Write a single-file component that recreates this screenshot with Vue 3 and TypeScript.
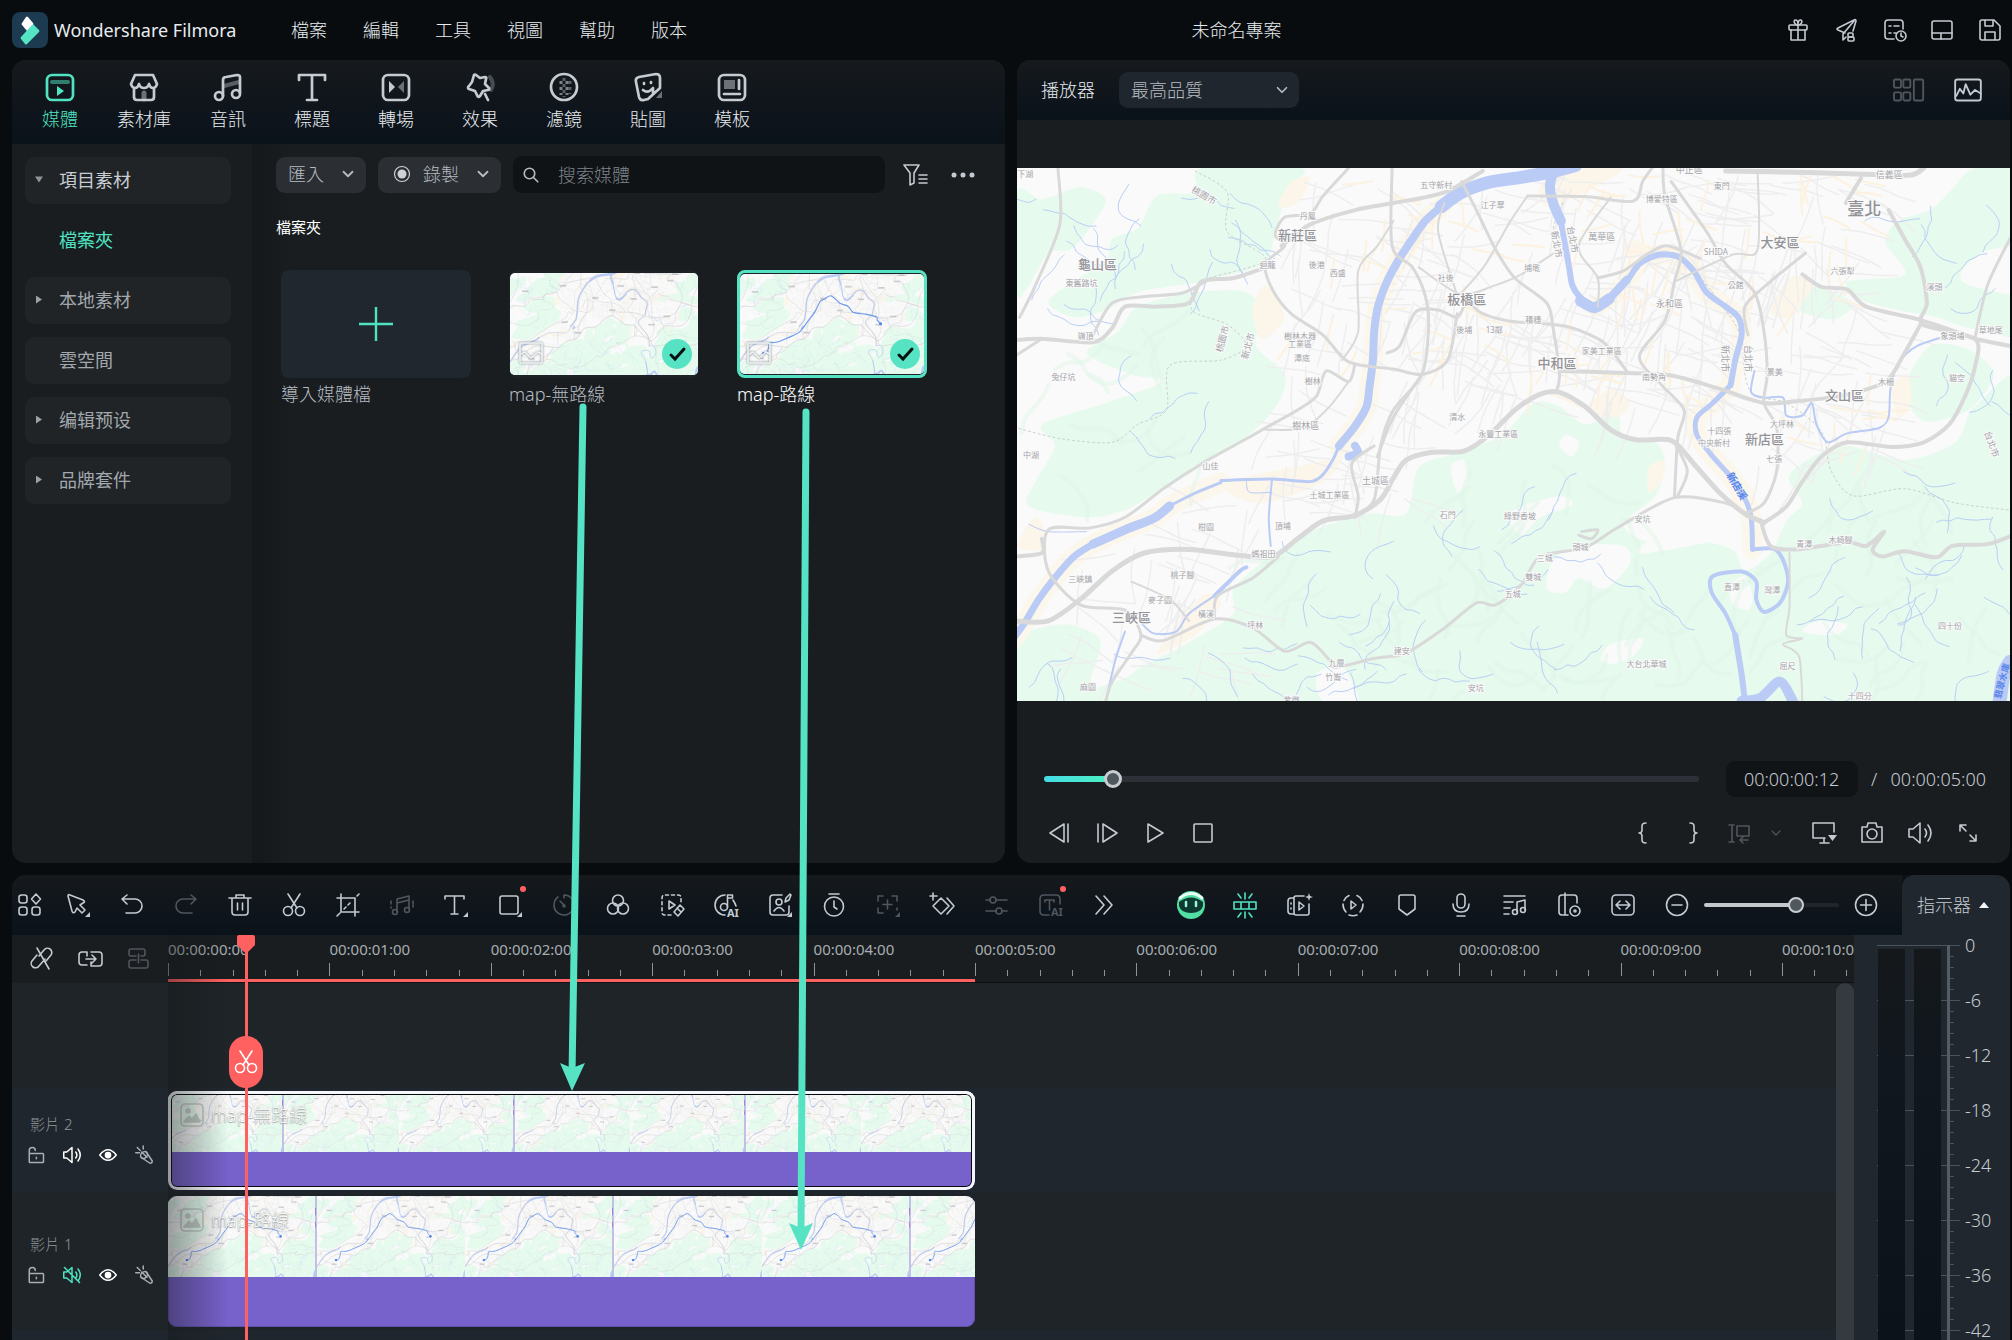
<script setup lang="ts">
import { ref } from 'vue'

type Tool = { icon: string; label: string; dim?: boolean; dot?: boolean; accent?: boolean }
type Clip = { name: string; thumbs: number; route: boolean; selected: boolean }
type Track = { label: string; muted: boolean; clip: Clip }

const corner = '<path d="M24 19v5h-5z" fill="currentColor" stroke="none"/>'

/* Icon markup on a 24 unit grid, stroked with the current colour */
const icons: Record<string, string> = {
  gift: '<rect x="3" y="7" width="18" height="5" rx="1"/><path d="M5 12v10h14V12M12 7v15M12 7C8 7 7 2 9.500 2S12 5 12 7c0-2 0-5 2.500-5S16 7 12 7"/>',
  send: '<path d="M11 15 4 12Q2 11 4 10L20 2q2-1 2 1l-3 10M20 3 9 16v6l3-3"/><rect x="14" y="15" width="5" height="4" rx="1"/><rect x="14" y="19" width="6" height="4" rx="1"/>',
  tasks: '<path d="M21 11V5q0-3-3-3H6Q3 2 3 5v13q0 3 3 3h6M7 8h2M12 8h5M7 15h2M12 15h2"/><circle cx="19" cy="18" r="5"/><path d="M19 15v3l2 1"/>',
  layout: '<rect x="2" y="3" width="20" height="18" rx="2"/><path d="M2 15h20M11 15v6"/>',
  save: '<path d="M2 4q0-2 2-2h12l6 6v12q0 2-2 2H4q-2 0-2-2zM7 2v6h8V2M7 22v-8h10v8"/>',
  chevron: '<path d="m6 9 6 6 6-6"/>',
  search: '<circle cx="10" cy="10" r="7"/><path d="m15 15 6 6"/>',
  filter: '<path d="M1 2h15l-5 8v10l-4 2V10zM16 12h8M16 16h8M16 20h8"/>',
  more: '<g fill="currentColor" stroke="none"><circle cx="3" cy="12" r="2.500"/><circle cx="12" cy="12" r="2.500"/><circle cx="21" cy="12" r="2.500"/></g>',
  record: '<circle cx="12" cy="12" r="10"/><circle cx="12" cy="12" r="6" fill="currentColor" stroke="none"/>',
  panes: '<rect x="0" y="3" width="6" height="7" rx="1"/><rect x="8" y="3" width="6" height="7" rx="1"/><rect x="0" y="14" width="6" height="7" rx="1"/><rect x="8" y="14" width="6" height="7" rx="1"/><rect x="17" y="3" width="8" height="18" rx="1"/>',
  scope: '<rect x="1" y="3" width="22" height="18" rx="2"/><path d="m2 17 3-6 3 4 2-8 4 9 4-4 5 3"/>',
  prev: '<path d="M17 3 3 12l14 9zM21 3v18"/>',
  step: '<path d="m8 3 14 9-14 9zM3 3v18"/>',
  play: '<path d="m5 3 15 9-15 9z"/>',
  stop: '<rect x="3" y="3" width="18" height="18" rx="1"/>',
  braceL: '<path d="M14 2q-4 0-4 3v4q0 3-3 3 3 0 3 3v4q0 3 4 3"/>',
  braceR: '<path d="M10 2q4 0 4 3v4q0 3 3 3-3 0-3 3v4q0 3-4 3"/>',
  lift: '<path d="M4 4v17M1 4h5M1 21h5M9 5h12v10H9zM13 19h7M15 16l-3 3 3 3"/>',
  monitor: '<path d="M13 17H1V2h21v9M8 22h9M12 17v5"/><path d="M16 14h9l-4.500 6z" fill="currentColor" stroke="none"/>',
  camera: '<path d="M2 6h5l1-4h8l1 4h5v15H2z"/><circle cx="12" cy="13" r="5"/>',
  speaker: '<path d="M1 8h4l7-6v20l-7-6H1zM17 8q3 4 0 8M20 4q6 8 0 16"/>',
  muted: '<path d="M1 8h4l7-6v20l-7-6H1zM17 8q3 4 0 8M20 4q6 8 0 16M2 2l20 20"/>',
  expand: '<path d="M4 10V4h6M4 4l6 6M20 14v6h-6M20 20l-6-6"/>',
  grid: '<rect x="1" y="2" width="8" height="8" rx="2.500"/><rect x="1" y="14" width="8" height="8" rx="2.500"/><rect x="14" y="14" width="8" height="8" rx="2.500"/><path d="m18 1 4.500 5-4.500 5-4.500-5z"/>',
  cursor: '<path d="M2 3q0-2 2-1l13 5q3 2 0 3l-3 2 5 5-3 3-5-5-2 4q-2 2-3-1z"/>' + corner,
  undo: '<path d="M7 2 2 6l5 5M2 6h13a6.500 6.500 0 0 1 0 14H6"/>',
  redo: '<path d="m17 2 5 4-5 5M22 6H9a6.500 6.500 0 0 0 0 14h9"/>',
  trash: '<path d="M1 5h22M8 5V2h8v3M4 5v14q0 3 3 3h10q3 0 3-3V5M9.500 10v7M14.500 10v7"/>',
  cut: '<path d="m6 1 9 14M18 1 9 15"/><circle cx="6" cy="18" r="4.500"/><circle cx="18" cy="18" r="4.500"/>',
  crop: '<path d="M5 1v18h18M1 5h18v18M8 16l2-2M12 12l2-2M21 3l2-2M1 23l3-3"/>',
  beat: '<path d="M7 19V6l12-3v13M7 10l12-3M1 8v3M23 8v3M1 14v1M23 12v2"/><circle cx="5" cy="19" r="2.500"/><circle cx="17" cy="17" r="2.500"/>',
  text: '<path d="M1 6V3h19v3M10.500 3v18M7 21h7"/>' + corner,
  mask: '<rect x="2" y="3" width="18" height="18" rx="2"/>' + corner,
  speed: '<path d="M6 4A10 10 0 1 0 12 2v3M8 8l4 4"/><circle cx="12" cy="13" r="1"/>',
  color: '<circle cx="12" cy="7.500" r="5.500"/><circle cx="7" cy="15.500" r="5.500"/><circle cx="17" cy="15.500" r="5.500"/>',
  smart: '<path d="M11 22H5q-3 0-3-3V5q0-3 3-3h13q3 0 3 3v4" stroke-dasharray="3 3"/><path d="m9 8 6 4-6 4zM20 12l4 4-6 7-4-4zM17 15l4 4"/>',
  audioAi: '<path d="M11 22A10 10 0 0 1 11 2M19 7q2 3 3 6"/><circle cx="10" cy="14" r="3.500"/><path d="M13.500 14V2h5v3h-5"/><text x="13" y="24" font-size="11" font-weight="700" stroke="none" fill="currentColor">AI</text>',
  portrait: '<path d="M14 2H5Q2 2 2 5v14q0 3 3 3h13q3 0 3-3v-6M17 9l1-4 4-4 1 1-2 5z"/><circle cx="11" cy="9" r="3"/><path d="M6 18q5-7 10 0"/>' + corner,
  timer: '<path d="M7 1h10"/><circle cx="12" cy="13.500" r="9.500"/><path d="M12 8v6l3 2"/>',
  track: '<path d="M2 8V3h5M16 3h5v5M21 15v2M7 20H2v-5M11.500 7v9M7 11.500h9"/>' + corner,
  keyframe: '<path d="m11 5 8 8-8 8-8-8zM17 5l7 8-7 8M3 0v7M0 3h7"/>',
  adjust: '<path d="M2 7h4M12 7h11M2 18h10M18 18h5"/><circle cx="9" cy="7" r="3"/><circle cx="15" cy="18" r="3"/>',
  textAi: '<path d="M11 22H6q-4 0-4-4V6q0-4 4-4h12q4 0 4 4v5M7 9V7h9v2M11.500 7v10"/><text x="13" y="23" font-size="11" font-weight="700" stroke="none" fill="currentColor">AI</text>',
  forward: '<path d="m4 3 8 9-8 9M12 3l8 9-8 9"/>',
  bot: '<circle cx="12" cy="12" r="14" fill="#52dfa4" stroke="none"/><path d="M1 5q11-9 22 0" stroke="#eafff5" stroke-width="3"/><path d="M0 9q12-9 24 0v4q-2 7-12 7T0 13z" fill="#0d3b31" stroke="none"/><path d="M7 9v4M17 9v4" stroke="#9df5dc" stroke-width="2.500"/>',
  split: '<path d="M1 9h22v7H1zM8 9v7M16 9v7M12 0v6M12 19v6M5 1l3 4M19 1l-3 4M5 24l3-4M19 24l-3-4"/>',
  sceneAi: '<path d="M17 3H9Q7 3 7 5v15q0 2 2 2h11q2 0 2-2v-9M7 5H4Q1 5 1 8v10q0 3 3 3h3M4 10v1M4 15v1M12 9l5 4-5 4z"/><path d="m22 0 1 3 3 1-3 1-1 3-1-3-3-1 3-1z" fill="currentColor" stroke="none"/>',
  render: '<path d="M8 2.500a10 10 0 0 0-5 5M2 11q0 5 3 8M16 2.500a10 10 0 0 1 5 5M22 11q0 5-3 8M8 22q4 1.500 8 0M10 8l5 4-5 4z"/>',
  marker: '<path d="M4 4q0-2 2-2h12q2 0 2 2v12l-8 6-8-6z"/>',
  mic: '<rect x="8" y="1" width="8" height="14" rx="4"/><path d="M4 11q0 8 8 8t8-8M8 23h8"/>',
  mixer: '<path d="M1 3h21M1 9h9M1 15h6M1 21h5M14 19V9l8-2v10"/><circle cx="12" cy="19" r="2.500"/><circle cx="20" cy="17" r="2.500"/>',
  preview: '<path d="M11 22H5q-3 0-3-3V5q0-3 3-3h12q3 0 3 3v5M8 0v22"/><circle cx="18" cy="18" r="5"/><circle cx="18" cy="18" r="1"/>',
  fit: '<rect x="1" y="2" width="22" height="20" rx="4"/><path d="M6 12h12M9 8l-4 4 4 4M15 8l4 4-4 4"/>',
  minus: '<circle cx="12" cy="12" r="10.500"/><path d="M7 12h10"/>',
  plus: '<circle cx="12" cy="12" r="10.500"/><path d="M6.500 12h11M12 6.500v11"/>',
  unlink: '<path d="M9 10 14 4a4 4 0 0 1 7 5l-5 6M15 13l-6 7a4 4 0 0 1-7-5l5-6M7 2l12 21"/>',
  chain: '<path d="M9 19H4q-3 0-3-3V9q0-3 3-3h5v4M16 6h5q3 0 3 3v8q0 3-3 3h-8v-4M8 13h10M14 9l4 4-4 4M13 6h4"/>',
  group: '<path d="M10 10H5q-2 0-2-2V5q0-2 2-2h12q2 0 2 2v3q0 2-2 2h-2M10 14H5q-2 0-2 2v4q0 2 2 2h15q2 0 2-2v-4q0-2-2-2h-5M12.500 8v9"/>',
  unlock: '<rect x="3" y="10" width="19" height="12" rx="1"/><path d="M3 10V6q0-4 4-4t4 4M12.500 15v2"/>',
  eye: '<path d="M1 12q11-14 22 0-11 14-22 0z"/><circle cx="12" cy="12" r="3.500" fill="currentColor"/>',
  effects: '<path d="m15 8 8 12q0 3-3 3L8 15"/><ellipse cx="12" cy="12" rx="5" ry="4" transform="rotate(-45 12 12)"/><path d="m9 8 7 7M1 9h5M3 2l4 4M11 0v4"/>',
  picture: '<rect x="1" y="1" width="22" height="22" rx="4"/><circle cx="8" cy="8" r="2" fill="currentColor"/><path d="m4 19 5-6 3 3 4-5 4 8z" fill="currentColor"/>',
  image: '<rect x="1" y="2" width="22" height="20" rx="1"/><path d="m2 13 4-2 6 6 7-6 4 2"/>',
}

/* Larger tab icons on a 30 unit grid */
const tabs = [
  { label: '媒體', icon: '<rect x="2" y="3" width="26" height="25" rx="5"/><path d="M7 10h16" stroke-width="4" opacity=".5"/><path d="m12 14 7 5-7 5z" fill="currentColor" stroke="none"/>' },
  { label: '素材庫', icon: '<path d="M6 3h18l4 9q-1 4-4 4t-4-4q-1 4-5 4t-5-4q-1 4-4 4t-4-4zM5 17v8q0 3 3 3h14q3 0 3-3v-8"/><path d="M15 21v6" stroke-width="5" opacity=".5"/>' },
  { label: '音訊', icon: '<path d="M10 24V8q0-3 3-3l11-2q3 0 3 2v16"/><path d="m11 14 15-4" stroke-width="4" opacity=".4"/><circle cx="6" cy="24" r="4"/><circle cx="23" cy="22" r="4"/>' },
  { label: '標題', icon: '<path d="M2 8V3h26v5M15 3v24M10 28h10"/>' },
  { label: '轉場', icon: '<rect x="2" y="3" width="26" height="25" rx="5"/><path d="m8 9 6 6-6 6z" fill="currentColor" stroke="none"/><path d="m23 9-6 6 6 6z" fill="currentColor" stroke="none" opacity=".5"/>' },
  { label: '效果', icon: '<path d="M9 3q1-1 2 0l4 3 5-1q2 0 1 2l-1 5 4 4q1 2-1 2l-5 1-3 5q-2 2-3-1l-2-4-6-2q-2-1 0-3l3-4zM20 22l3 6"/><path d="M25 5q5 7 1 13" stroke-width="4" opacity=".3"/>' },
  { label: '濾鏡', icon: '<circle cx="15" cy="15" r="13"/><path d="M12 9v14M18 9v14" stroke-width="3" stroke-linecap="butt" stroke-dasharray="3 3" opacity=".6"/><path d="M15 6v19M21 9v13" stroke-width="3" stroke-linecap="butt" stroke-dasharray="3 3" opacity=".4"/>' },
  { label: '貼圖', icon: '<path d="M23 2 6 5Q2 6 3 10l3 15q1 4 5 3l4-1 12-11V6q0-4-4-4zM11 11v1M18 10v1M10 18q5 4 10-2v6"/><path d="M29 19v7h-6z" fill="currentColor" opacity=".5" stroke="none"/>' },
  { label: '模板', icon: '<rect x="2" y="3" width="26" height="25" rx="5"/><path d="M7 8h11v9H7z" fill="currentColor" opacity=".5" stroke="none"/><path d="M22 8v9M7 22h16"/>' },
]

const menus = ['檔案', '編輯', '工具', '視圖', '幫助', '版本']
const windowTools = [['gift', '禮物'], ['send', '分享'], ['tasks', '工作'], ['layout', '版面'], ['save', '儲存']]
const folders = [
  { label: '項目素材', arrow: 'down', tone: 'strong' },
  { label: '檔案夾', arrow: '', tone: 'current' },
  { label: '本地素材', arrow: 'right', tone: '' },
  { label: '雲空間', arrow: '', tone: '' },
  { label: '编辑预设', arrow: 'right', tone: '' },
  { label: '品牌套件', arrow: 'right', tone: '' },
]
const media = [
  { label: 'map-無路線', route: false, active: false },
  { label: 'map-路線', route: true, active: true },
]

const editTools: Tool[] = [
  { icon: 'grid', label: '工具集' }, { icon: 'cursor', label: '選取' }, { icon: 'undo', label: '復原' },
  { icon: 'redo', label: '重做', dim: true }, { icon: 'trash', label: '刪除' }, { icon: 'cut', label: '分割' },
  { icon: 'crop', label: '裁切' }, { icon: 'beat', label: '節拍', dim: true }, { icon: 'text', label: '文字' },
  { icon: 'mask', label: '遮罩', dot: true }, { icon: 'speed', label: '速度', dim: true }, { icon: 'color', label: '色彩' },
  { icon: 'smart', label: '智慧剪輯' }, { icon: 'audioAi', label: 'AI 音訊' }, { icon: 'portrait', label: '人像' },
  { icon: 'timer', label: '時長' }, { icon: 'track', label: '追蹤', dim: true }, { icon: 'keyframe', label: '關鍵影格' },
  { icon: 'adjust', label: '調整', dim: true }, { icon: 'textAi', label: 'AI 文字', dim: true, dot: true }, { icon: 'forward', label: '更多' },
]
const viewTools: Tool[] = [
  { icon: 'bot', label: '助理' }, { icon: 'split', label: '自動分割', accent: true }, { icon: 'sceneAi', label: '場景' },
  { icon: 'render', label: '算圖' }, { icon: 'marker', label: '標記' }, { icon: 'mic', label: '錄音' },
  { icon: 'mixer', label: '混音' }, { icon: 'preview', label: '預覽' }, { icon: 'fit', label: '符合視窗' }, { icon: 'minus', label: '縮小' },
]

const quality = ref('最高品質')
const query = ref('')
const seek = ref(94)
const zoom = ref(71)
const timecode = ref('00:00:00:12')

const visibleSeconds = 10.446
const playheadSeconds = 0.486
const share = (seconds: number) => `${(seconds / visibleSeconds) * 100}%`
const seconds = Array.from({ length: 11 }, (_, i) => `00:00:${String(i).padStart(2, '0')}:00`)
const tracks: Track[] = [
  { label: '影片 2', muted: false, clip: { name: 'map-無路線', thumbs: 6.987, route: false, selected: true } },
  { label: '影片 1', muted: true, clip: { name: 'map-路線', thumbs: 5.434, route: true, selected: false } },
]
const levels = ['0', '-6', '-12', '-18', '-24', '-30', '-36', '-42']

/* Map geometry: survey points are converted to the 993 x 533 sheet */
const px = (x: number) => Math.round(((x - 11) / 1.565) * 10) / 10
const py = (y: number) => Math.round(((y - 22) / 2.8) * 10) / 10
const parse = (s: string) => s.split(' ').map((p) => p.split(',').map(Number)).map(([x, y]) => [px(x), py(y)])

function curve(s: string, closed = false): string {
  const p = parse(s)
  const n = p.length
  const at = (i: number) => (closed ? p[(i + n) % n] : p[Math.max(0, Math.min(n - 1, i))])
  let d = `M${p[0][0]} ${p[0][1]}`
  for (let i = 0; i < (closed ? n : n - 1); i++) {
    const [a, b, c, e] = [at(i - 1), at(i), at(i + 1), at(i + 2)]
    const f = (v: number) => v.toFixed(1)
    d += `C${f(b[0] + (c[0] - a[0]) / 7)} ${f(b[1] + (c[1] - a[1]) / 7)} ${f(c[0] - (e[0] - b[0]) / 7)} ${f(c[1] - (e[1] - b[1]) / 7)} ${c[0]} ${c[1]}`
  }
  return closed ? d + 'Z' : d
}

const greens = [
  '11,90 50,110 110,75 150,110 125,190 95,250 60,260 30,350 11,370',
  '230,100 290,90 300,22 455,22 440,80 425,140 415,200 395,290 300,340 200,370 150,420 100,440 60,400 90,350 150,280 160,220 200,190',
  '200,410 290,370 370,370 395,430 385,520 430,600 420,680 380,760 330,820 280,880 240,920 180,980 120,1000 30,970 40,900 70,800 50,740 150,680 240,620 190,600 120,540 170,480',
  '640,860 700,820 770,770 820,680 860,690 900,740 950,710 960,780 1010,790 1025,850 1010,940 960,1020 1000,1070 1060,1060 1130,1090 1150,1150 1190,1100 1215,1010 1240,960 1220,880 1300,800 1400,840 1480,790 1510,690 1600,640 1600,1560 160,1560 190,1440 260,1370 300,1330 350,1270 350,1200 400,1120 470,1040 560,990 620,990',
  '1510,22 1600,10 1600,210 1520,260 1490,340 1600,400 1600,500 1500,470 1450,440 1390,420 1330,390 1310,340 1400,320 1370,230 1390,170 1440,140 1470,90',
  '1230,380 1260,355 1320,400 1290,445 1240,425',
  '1440,520 1500,530 1540,600 1500,700 1430,730 1400,640',
  '-10,1360 80,1300 140,1340 130,1430 100,1560 -10,1560',
].map((s) => curve(s, true))
const clearings = [
  '840,1200 850,1120 890,1080 960,1080 970,1130 930,1200 890,1170 870,1210',
  '780,1000 800,970 860,940 880,965 830,1000 800,1050',
  '925,1400 940,1355 990,1340 975,1390 945,1410',
  '980,1100 1030,1030 1080,1000 1100,1060 1050,1085',
  '1130,1240 1128,1190 1150,1165 1162,1220 1155,1260',
  '490,1514 480,1440 520,1420 545,1514', '860,800 870,770 890,790 880,830', '690,860 710,840 715,900 700,930',
  '1240,1320 1265,1290 1310,1300 1290,1330',
].map((s) => curve(s, true))
const sands = [
  '830,70 885,22 960,22 900,90 840,130', '960,260 970,225 1000,240 985,290', '1190,420 1220,330 1260,340 1220,440',
  '380,420 400,350 430,440 395,500', '900,700 940,640 970,680 950,720', '1000,860 1025,840 1020,900 1000,930',
  '420,130 440,60 470,50 450,120', '11,1080 40,1000 55,1040 50,1090', '230,1380 300,1220 330,1240 290,1330',
  '1380,640 1405,600 1410,680 1390,720', '1130,960 1140,900 1165,930', '340,900 470,850 520,830 490,900 400,960 350,940',
].map((s) => curve(s, true))

const danshui = '675,130 650,170 630,220 608,280 590,340 576,410 570,480 568,560 563,630 558,690 540,745 515,800'
const dahan = '330,903 290,932 250,968 225,1003 180,1035 130,1075 100,1110 70,1170 45,1230 25,1290 5,1340'
const bend = '915,410 940,385 965,340 985,290 1015,265 1045,270 1070,310 1090,370 1120,410 1140,440 1145,490 1135,560 1128,630'
const xindian = '1128,630 1100,680 1075,720 1075,770 1100,830 1125,880 1148,940 1160,1000 1162,1090'
const banks = [danshui, dahan, bend, xindian].map((s) => curve(s))
const rivers = [
  ['885,15 850,32 800,48 750,62 705,92 675,130', 13], [danshui, 8], ['330,903 290,932 250,968', 3], ['250,968 225,1003 180,1035 130,1075', 9], ['130,1075 100,1110 70,1170 45,1230 25,1290 5,1340', 7],
  [bend, 6], [xindian, 5], ['515,800 505,840 490,880 470,900 410,893 330,897', 3], ['540,800 545,820 530,830', 8],
  ['853,22 845,70 850,120 862,170', 10], ['862,170 868,230 875,300 880,350 893,385 915,410', 6], ['893,395 915,413 938,388', 11], ['938,388 965,335', 8],
  ['1162,1090 1195,1088 1210,1120 1218,1180 1205,1240 1180,1265 1168,1230 1168,1180 1145,1152 1100,1165 1098,1210 1120,1270 1135,1330', 4],
  ['1135,1330 1145,1440 1150,1514', 6], ['1145,1514 1175,1505 1205,1460 1225,1514', 10], ['1565,1405 1555,1440 1548,1530', 14],
  ['1165,590 1160,650 1180,665 1210,665 1215,715 1240,715 1255,680 1262,740 1280,790 1310,765 1360,750 1375,720 1378,640 1390,570 1420,520 1480,485', 2],
  ['410,895 405,1000 408,1080', 2], ['370,1140 360,1150 320,1220', 4], ['320,1220 280,1270 260,1320 225,1325 205,1295', 2],
  ['180,1320 165,1400 150,1514', 2], ['120,1040 60,1040 30,1020', 1], ['370,900 375,930 410,930', 1],
].map(([s, w]) => ({ d: curve(s as string), w: w as number }))

const roads = [
  ['1375,140 1400,220 1425,300 1435,400 1428,460 1510,500 1510,580 1495,660 1470,740 1430,790 1380,803 1310,790 1270,830 1240,900 1215,970 1180,1015', 4],
  ['5,1290 60,1290 110,1230 160,1150 210,1100 280,1090 350,1105 410,1110 450,1060 490,1010 540,995 580,950 600,890 620,840 660,818 710,815 750,770 790,700 830,655 860,650 900,690 940,755 980,783 1035,785 1070,850 1110,930 1150,990 1180,1015', 5],
  ['5,505 50,500 130,510 160,470 180,410 230,410 280,400 300,340 350,330 400,300', 4], ['130,490 160,400 210,382 270,372 310,335', 3],
  ['530,22 490,100 470,150 430,160 415,210 430,240 400,290 410,360 440,430 490,490 530,565 600,585 645,600 685,560 700,430', 3],
  ['425,240 470,180 540,140 600,120 680,90 740,30', 4], ['598,22 598,240 630,300 650,380 655,470 645,600 600,700 580,800 570,950 540,1000', 3],
  ['707,60 730,140 760,250 790,330 840,400 850,470 860,600 855,650', 3], ['810,100 780,180 745,290 705,375', 2],
  ['860,250 800,320 760,350 705,375 640,300', 2], ['590,540 610,520 635,425 670,420 700,440 715,400 740,430 780,450 870,465 920,500 940,530 965,590', 3],
  ['860,590 940,595 1030,602 1110,640 1180,680 1230,675 1300,660 1370,620 1400,540 1425,460', 4], ['810,100 900,102 975,115 990,60 1005,22', 3],
  ['940,105 890,240 920,330 920,410', 2], ['1022,22 1025,100 1050,250 1040,340 1025,450 985,550 1020,630 1055,700 1045,780 1040,940', 3],
  ['1035,60 1090,200 1120,290 1165,370 1180,480 1185,600 1180,680 1200,750 1200,870 1180,960 1150,990', 3],
  ['1245,260 1190,340 1150,410 1155,490', 3], ['1240,320 1270,355 1310,362 1340,410 1420,445 1480,480 1510,500 1565,520', 4],
  ['920,330 960,310 1000,260 1030,240 1080,275', 3], ['1120,30 1250,35 1350,40 1410,42 1430,22', 5], ['1332,50 1308,120', 4],
  ['150,1514 160,1460 190,1380 205,1330 180,1260 110,1245 60,1150 60,1035 125,1030 180,1000 240,920 300,850 360,790 410,740 450,700 480,660 495,590 530,620 540,570', 3],
  ['400,755 460,750 500,690 530,620', 2], ['600,170 575,240 545,310 545,480 520,560', 2],
  ['205,1330 240,1345 320,1285 380,1310 430,1375 470,1350 500,1400 510,1420 570,1395 620,1380 680,1310 730,1240 760,1245 800,1190 830,1110 900,1085 950,1030 1040,945 1120,960 1150,990', 3],
  ['420,1110 380,1170 325,1220 320,1280', 3], ['190,1180 250,1230 280,1290', 2], ['895,1040 920,1035 910,1060 890,1050', 3],
  ['1175,1010 1190,1080 1230,1090 1310,1070 1340,1080 1368,1040 1350,1090 1365,1110 1400,1095 1450,1112 1475,1080 1530,1075 1570,1050', 4],
  ['1220,1100 1220,1250 1215,1330 1240,1340 1210,1355 1235,1390 1240,1514', 2], ['75,22 78,180 40,350 15,440', 3], ['11,545 50,500', 3],
  ['570,800 535,850 545,940 540,1000', 3], ['645,600 600,720 575,830', 3], ['680,120 670,200 700,380', 2], ['1040,790 1060,870 1045,940', 3],
  ['1170,30 1170,250 1130,265 1040,340', 2], ['1510,500 1530,350 1565,220', 3], ['5,1110 50,1100 50,1060', 4],
].map(([s, w]) => ({ d: curve(s as string), w: w as number }))

const borders = ['290,30 340,90 340,200 400,280 300,340 285,420 340,460 370,520 330,560 250,575 245,700 200,740 160,790 80,780 11,750',
  '865,120 850,200 875,280 885,360 915,405 970,330 1010,265 1060,290 1120,420 1145,500 1150,600 1165,660 1215,680 1270,760 1285,870 1320,940 1400,920 1480,960 1565,980'].map((s) => curve(s))

/* Small streets and creeks follow a fixed pseudo-random sequence */
let state = 7
const rnd = () => (state = (state * 16807) % 2147483647) / 2147483647
function scatter(boxes: number[][], len: number, tilt: number, steps: number): string[] {
  const out: string[] = []
  for (const [x0, y0, x1, y1, n] of boxes) {
    for (let i = 0; i < n; i++) {
      let x = x0 + rnd() * (x1 - x0)
      let y = y0 + rnd() * (y1 - y0)
      let a = tilt + (rnd() < 0.5 ? 0 : Math.PI / 2) + (rnd() - 0.5) * 0.6
      const pts = [`${x.toFixed(0)},${y.toFixed(0)}`]
      for (let k = 0; k < steps; k++) {
        a += (rnd() - 0.5) * (steps > 3 ? 1.2 : 0.4)
        x += Math.cos(a) * len
        y += Math.sin(a) * len * 1.8
        pts.push(`${x.toFixed(0)},${y.toFixed(0)}`)
      }
      out.push(curve(pts.join(' ')))
    }
  }
  return out
}
const streets = scatter([[440, 40, 820, 560, 90], [860, 30, 1360, 420, 120], [620, 400, 1120, 700, 80], [380, 560, 640, 960, 36], [1150, 480, 1380, 860, 40], [60, 1080, 360, 1440, 34], [200, 900, 500, 1080, 14]], 28, 0.25, 3)
const yellows = scatter([[440, 60, 820, 560, 26], [880, 40, 1340, 420, 44], [640, 420, 1100, 660, 24], [1180, 560, 1360, 800, 10]], 24, 0.2, 2)
const creeks = scatter([[20, 60, 220, 440, 13], [250, 60, 400, 300, 8], [60, 500, 360, 800, 4], [420, 1060, 1040, 1440, 32], [680, 840, 960, 1000, 4], [1260, 880, 1540, 1440, 22], [1380, 80, 1550, 380, 6], [1430, 540, 1540, 720, 4], [20, 1380, 120, 1480, 3], [200, 1380, 400, 1480, 4]], 11, 0.9, 8)
const ridges = scatter([[60, 420, 380, 900, 14], [420, 1060, 1540, 1490, 60], [680, 820, 980, 1060, 10], [1260, 840, 1540, 1080, 10]], 22, 0.7, 4)

const places: [number, number, string, number][] = [
  [1337, 135, '臺北', 17], [450, 210, '新莊區', 13], [137, 290, '龜山區', 13], [1205, 230, '大安區', 13], [715, 390, '板橋區', 13],
  [856, 568, '中和區', 13], [1306, 658, '文山區', 13], [1181, 780, '新店區', 13], [190, 1280, '三峽區', 13], [926, 213, '萬華區', 9],
  [1032, 402, '永和區', 9], [463, 742, '樹林區', 9], [572, 897, '土城區', 9], [1063, 27, '中正區', 9], [1376, 41, '信義區', 9],
  [667, 68, '五守新村', 8], [755, 123, '江子翠', 8], [466, 155, '丹鳳', 8], [403, 292, '迴龍', 8], [480, 292, '後港', 8], [513, 314, '西盛', 8],
  [682, 328, '社後', 8], [817, 300, '埔墘', 8], [819, 446, '積穗', 8], [711, 475, '後埔', 8], [758, 473, '13鄰', 8], [454, 492, '樹林木器', 8],
  [454, 513, '工業區', 8], [457, 552, '潭底', 8], [474, 616, '樹林', 8], [926, 533, '家美工業區', 8], [1008, 605, '南勢角', 8], [1197, 593, '景美', 8],
  [1020, 108, '博愛特區', 8], [1114, 72, '東門', 8], [1105, 256, 'SHIDA', 8], [1136, 347, '公館', 8], [1303, 309, '六張犁', 8], [1447, 355, '溪頭', 8],
  [1475, 491, '象頭埔', 8], [1535, 473, '草地尾', 8], [1482, 608, '貓空', 8], [1371, 621, '木柵', 8], [1208, 736, '大坪林', 8], [1110, 758, '十四張', 8],
  [1102, 791, '中央新村', 8], [1196, 835, '七張', 8], [700, 717, '清水', 8], [764, 764, '永豐工業區', 8], [112, 343, '東舊路坑', 8], [118, 491, '嶺頂', 8],
  [84, 607, '兔仔坑', 8], [33, 823, '中湖', 8], [314, 855, '山佳', 8], [500, 936, '土城工業區', 8], [685, 991, '石門', 8], [798, 994, '綠野香坡', 8],
  [990, 1003, '安坑', 8], [307, 1026, '柑園', 8], [427, 1022, '頂埔', 8], [397, 1102, '媽祖田', 8], [110, 1172, '三峽鎮', 8], [270, 1159, '桃子腳', 8],
  [235, 1230, '麥子園', 8], [307, 1268, '橫溪', 8], [384, 1301, '坪林', 8], [893, 1082, '頭城', 8], [837, 1113, '三城', 8], [819, 1165, '雙城', 8],
  [787, 1213, '五城', 8], [613, 1373, '建安', 8], [511, 1407, '九層', 8], [506, 1447, '竹崙', 8], [122, 1473, '麻園', 8], [729, 1476, '安坑', 8],
  [996, 1409, '大台北華城', 8], [1217, 1414, '屈尺', 8], [1243, 1072, '青潭', 8], [1300, 1062, '木崎腳', 8], [1193, 1202, '灣潭', 8], [1130, 1193, '直潭', 8],
  [1471, 1304, '四十份', 8], [1330, 1498, '十四分', 8], [24, 36, '下湖', 8], [441, 1509, '紫微', 8],
]
const tilted: [number, number, string, number, number][] = [
  [304, 98, '桃園市', 9, 30], [332, 500, '桃園市', 9, -75], [372, 520, '新北市', 9, -75], [856, 235, '新北市', 9, 80],
  [881, 222, '台北市', 9, 80], [1120, 555, '新北市', 9, 90], [1156, 555, '台北市', 9, 90], [1537, 795, '台北市', 9, 70],
]
const route = curve('210,1203 235,1190 252,1124 261,1045 300,1045 350,1025 401,985 460,940 519,877 594,704 645,580 687,432 720,400 780,348 855,457 925,506 968,595 1080,625 1164,664 1170,710 1198,763')
</script>

<template>
  <div class="app">
    <svg class="defs" aria-hidden="true">
      <symbol id="terrain" viewBox="0 0 993 533" preserveAspectRatio="none">
        <rect width="993" height="533" fill="#fafafa" />
        <path v-for="(d, i) in greens" :key="'g' + i" :d="d" fill="#e6fbee" />
        <path v-for="(d, i) in clearings" :key="'c' + i" :d="d" fill="#fafafa" />
        <path v-for="(d, i) in sands" :key="'s' + i" :d="d" fill="#fcf6ea" />
        <g fill="none" stroke-linecap="round" stroke-linejoin="round">
          <path v-for="(d, i) in banks" :key="'b' + i" :d="d" stroke="#fcf7ec" stroke-width="20" />
          <path v-for="(d, i) in ridges" :key="'ri' + i" :d="d" stroke="#dff6e8" stroke-width="4" opacity=".5" />
          <path v-for="(d, i) in streets" :key="'st' + i" :d="d" stroke="#eeeeef" stroke-width="1.5" />
          <path v-for="(d, i) in yellows" :key="'y' + i" :d="d" stroke="#fcf2df" stroke-width="2" />
          <path v-for="(d, i) in creeks" :key="'cr' + i" :d="d" stroke="#b8cef5" stroke-width="1" />
          <path v-for="(d, i) in borders" :key="'bo' + i" :d="d" stroke="#c9cfcb" stroke-width="1" stroke-dasharray="2 3" />
          <path v-for="(r, i) in rivers" :key="'r' + i" :d="r.d" stroke="#bacbf5" :stroke-width="r.w" />
          <path v-for="(r, i) in roads" :key="'ro' + i" :d="r.d" stroke="#d9d9d9" :stroke-width="r.w" />
        </g>
      </symbol>
      <symbol id="sheet" viewBox="0 0 993 533" preserveAspectRatio="none">
        <use href="#terrain" width="993" height="533" />
        <rect v-for="(p, i) in places.slice(0, 15)" :key="i" :x="px(p[0]) - 17" :y="py(p[1]) - 5" width="34" height="9" fill="#b0b0b5" opacity=".6" />
      </symbol>
      <symbol id="sheet-route" viewBox="0 0 993 533" preserveAspectRatio="none">
        <use href="#sheet" width="993" height="533" />
        <path :d="route" fill="none" stroke="#6b99ef" stroke-width="6" stroke-linejoin="round" />
        <circle :cx="px(210)" :cy="py(1203)" r="8" fill="#4a82ee" />
        <circle :cx="px(1198)" :cy="py(763)" r="8" fill="#4a82ee" />
      </symbol>
    </svg>

    <header class="titlebar">
      <div class="brand">
        <svg class="logo" viewBox="0 0 36 36" aria-hidden="true">
          <rect width="36" height="36" rx="8" fill="#1c3a50" />
          <path d="M14 5q1-1 2 0l5 6q1 1 0 2l-6 6-5-6q-1-1 0-2z" fill="#fff" />
          <path d="M20 13q1-1 2 0l5 5q1 1 0 2l-12 12q-1 1-2 0l-4-5q-1-1 0-2z" fill="#55e5c5" />
        </svg>
        <span>Wondershare Filmora</span>
      </div>
      <nav class="menu"><button v-for="m in menus" :key="m" type="button">{{ m }}</button></nav>
      <h1>未命名專案</h1>
      <div class="window-tools">
        <button v-for="[icon, label] in windowTools" :key="icon" type="button" class="icon" :aria-label="label"><svg viewBox="0 0 24 24" v-html="icons[icon]" /></button>
      </div>
    </header>

    <main class="top">
      <section class="panel media">
        <nav class="tabs">
          <button v-for="(t, i) in tabs" :key="t.label" type="button" :class="{ on: i === 0 }">
            <svg viewBox="0 0 30 30" v-html="t.icon" /><span>{{ t.label }}</span>
          </button>
        </nav>
        <div class="media-body">
          <aside class="folders">
            <button v-for="f in folders" :key="f.label" type="button" :class="f.tone"><i :class="f.arrow" />{{ f.label }}</button>
          </aside>
          <div class="library">
            <div class="filters">
              <button type="button" class="chip">匯入<svg class="small" viewBox="0 0 24 24" v-html="icons.chevron" /></button>
              <button type="button" class="chip"><svg class="rec" viewBox="0 0 24 24" v-html="icons.record" />錄製<svg class="small" viewBox="0 0 24 24" v-html="icons.chevron" /></button>
              <label class="search"><svg viewBox="0 0 24 24" v-html="icons.search" /><input v-model="query" type="text" placeholder="搜索媒體" aria-label="搜索媒體" /></label>
              <button type="button" class="icon wide" aria-label="篩選"><svg viewBox="0 0 24 24" v-html="icons.filter" /></button>
              <button type="button" class="icon wide" aria-label="更多"><svg viewBox="0 0 24 24" v-html="icons.more" /></button>
            </div>
            <h2>檔案夾</h2>
            <div class="cards">
              <figure>
                <button type="button" class="thumb add" aria-label="導入媒體檔"><svg viewBox="0 0 34 34"><path d="M17 0v34M0 17h34" /></svg></button>
                <figcaption>導入媒體檔</figcaption>
              </figure>
              <figure v-for="m in media" :key="m.label" :class="{ active: m.active }">
                <div class="thumb">
                  <svg class="map" viewBox="0 0 993 533" preserveAspectRatio="none"><use :href="m.route ? '#sheet-route' : '#sheet'" width="993" height="533" /></svg>
                  <svg class="kind" viewBox="0 0 24 24" v-html="icons.image" />
                  <svg class="tick" viewBox="0 0 30 30"><circle cx="15" cy="15" r="15" /><path d="m9 16 4 4 9-10" /></svg>
                </div>
                <figcaption>{{ m.label }}</figcaption>
              </figure>
            </div>
          </div>
        </div>
      </section>

      <section class="panel player">
        <div class="player-head">
          <label for="quality">播放器</label>
          <div class="select"><select id="quality" v-model="quality"><option>最高品質</option></select><svg viewBox="0 0 24 24" v-html="icons.chevron" /></div>
          <button type="button" class="icon view faint" aria-label="並排"><svg viewBox="0 0 24 24" v-html="icons.panes" /></button>
          <button type="button" class="icon view" aria-label="示波器"><svg viewBox="0 0 24 24" v-html="icons.scope" /></button>
        </div>
        <svg class="screen" viewBox="0 0 993 533">
          <use href="#terrain" width="993" height="533" />
          <g class="places">
            <text v-for="(p, i) in places" :key="i" :x="px(p[0])" :y="py(p[1])" :font-size="p[3]" :class="{ major: p[3] > 10 }">{{ p[2] }}</text>
            <text v-for="(p, i) in tilted" :key="'t' + i" :font-size="p[3]" :transform="`translate(${px(p[0])} ${py(p[1])}) rotate(${p[4]})`">{{ p[2] }}</text>
            <text class="water" font-size="10" :transform="`translate(${px(1138)} ${py(912)}) rotate(60)`">新店溪</text>
            <text class="water" font-size="9" :transform="`translate(${px(1552)} ${py(1458)}) rotate(-75)`">翡翠水庫</text>
          </g>
        </svg>
        <div class="seek">
          <input v-model="seek" type="range" min="0" max="1000" aria-label="播放位置" :style="{ '--fill': `${seek / 10 + 1}%` }" />
          <input v-model="timecode" type="text" class="time" aria-label="目前時間" />
          <span class="slash">/</span><span>00:00:05:00</span>
        </div>
        <div class="transport">
          <div>
            <button v-for="n in ['prev', 'step', 'play', 'stop']" :key="n" type="button" class="icon" :aria-label="n"><svg viewBox="0 0 24 24" v-html="icons[n]" /></button>
          </div>
          <div>
            <button v-for="n in ['braceL', 'braceR']" :key="n" type="button" class="icon" :aria-label="n"><svg viewBox="0 0 24 24" v-html="icons[n]" /></button>
            <span class="pair">
              <button type="button" class="icon faint" aria-label="提升"><svg viewBox="0 0 24 24" v-html="icons.lift" /></button>
              <button type="button" class="icon faint tiny" aria-label="提升選項"><svg viewBox="0 0 24 24" v-html="icons.chevron" /></button>
            </span>
            <button v-for="n in ['monitor', 'camera', 'speaker', 'expand']" :key="n" type="button" class="icon" :aria-label="n"><svg viewBox="0 0 24 24" v-html="icons[n]" /></button>
          </div>
        </div>
      </section>
    </main>

    <section class="timeline">
      <div class="bar">
        <div class="tools">
          <button v-for="t in editTools" :key="t.icon" type="button" class="tool" :class="{ faint: t.dim }" :aria-label="t.label"><svg viewBox="0 0 24 24" v-html="icons[t.icon]" /><b v-if="t.dot" /></button>
          <span class="spacer" />
          <button v-for="t in viewTools" :key="t.icon" type="button" class="tool" :class="{ accent: t.accent }" :aria-label="t.label"><svg viewBox="0 0 24 24" v-html="icons[t.icon]" /></button>
          <input v-model="zoom" type="range" class="zoom" min="0" max="100" aria-label="縮放" :style="{ '--fill': `${zoom}%` }" />
          <button type="button" class="tool" aria-label="放大"><svg viewBox="0 0 24 24" v-html="icons.plus" /></button>
        </div>
        <button type="button" class="meter-tab">指示器<i /></button>
      </div>
      <div class="body">
        <div class="editor">
          <div class="ruler-row">
            <div class="head-tools">
              <button type="button" class="icon" aria-label="取消連結"><svg viewBox="0 0 24 24" v-html="icons.unlink" /></button>
              <button type="button" class="icon" aria-label="磁吸"><svg viewBox="0 0 24 24" v-html="icons.chain" /></button>
              <button type="button" class="icon faint" aria-label="群組"><svg viewBox="0 0 24 24" v-html="icons.group" /></button>
            </div>
            <div class="ruler">
              <div v-for="s in seconds" :key="s" class="second" :style="{ width: share(1) }"><span>{{ s }}</span><div><i v-for="n in 5" :key="n" /></div></div>
              <div class="range" :style="{ width: share(5) }" />
            </div>
          </div>
          <div class="tracks">
            <div class="blank" />
            <div v-for="(t, i) in tracks" :key="t.label" class="track" :class="{ tall: i === 1 }">
              <div class="track-head">
                <span>{{ t.label }}</span>
                <div>
                  <button type="button" class="icon" aria-label="鎖定"><svg viewBox="0 0 24 24" v-html="icons.unlock" /></button>
                  <button type="button" class="icon lit" :class="{ accent: t.muted }" aria-label="靜音"><svg viewBox="0 0 24 24" v-html="t.muted ? icons.muted : icons.speaker" /></button>
                  <button type="button" class="icon lit" aria-label="顯示"><svg viewBox="0 0 24 24" v-html="icons.eye" /></button>
                  <button type="button" class="icon" aria-label="效果"><svg viewBox="0 0 24 24" v-html="icons.effects" /></button>
                </div>
              </div>
              <div class="lane">
                <div class="clip" :class="{ selected: t.clip.selected }" :style="{ width: share(5) }">
                  <div class="strip">
                    <svg v-for="n in Math.ceil(t.clip.thumbs)" :key="n" viewBox="0 0 993 533" preserveAspectRatio="none" :style="{ width: `${100 / t.clip.thumbs}%` }"><use :href="t.clip.route ? '#sheet-route' : '#sheet'" width="993" height="533" /></svg>
                  </div>
                  <div class="clip-label"><svg viewBox="0 0 24 24" v-html="icons.picture" /><span>{{ t.clip.name }}</span></div>
                </div>
              </div>
            </div>
            <div class="rest" />
            <div class="scrollbar" />
          </div>
          <div class="overlay">
            <div class="fade" />
            <div class="playhead" :style="{ left: share(playheadSeconds) }">
              <svg class="knob" viewBox="0 0 18 18"><path d="M0 2q0-2 2-2h14q2 0 2 2v8l-6 6q-3 3-6 0l-6-6z" /></svg>
              <button type="button" aria-label="在此分割"><svg viewBox="0 0 24 24" v-html="icons.cut" /></button>
            </div>
          </div>
        </div>
        <div class="meter">
          <div class="levels"><i /><i /><b /></div>
          <ul><li v-for="l in levels" :key="l">{{ l }}</li></ul>
        </div>
      </div>
    </section>

    <svg class="arrow first" viewBox="0 0 40 690" aria-hidden="true"><path d="M28 2 17 670" /><path class="tip" d="m5 658 12 5 13-5-13 28z" /></svg>
    <svg class="arrow last" viewBox="0 0 40 845" aria-hidden="true"><path d="M21 2 16 825" /><path class="tip" d="m4 813 12 5 12-5-12 27z" /></svg>
  </div>
</template>

<style>
body { margin: 0; background: #080c0f; }
</style>

<style scoped>
* { box-sizing: border-box; }
.app { position: relative; display: flex; flex-direction: column; height: 100vh; overflow: hidden; background: #080c0f; color: #e8ecf0; font: 300 18px/24px "Noto Sans", "Noto Sans CJK TC", sans-serif; }
.defs { position: absolute; width: 0; height: 0; }
button, input, select { padding: 0; border: 0; background: none; color: inherit; font: inherit; }
svg { display: block; flex: none; }
button svg, .search svg, .select svg, .kind, .clip-label svg { width: 24px; height: 24px; overflow: visible; fill: none; stroke: currentColor; stroke-width: 1.6; stroke-linejoin: round; stroke-linecap: round; }
h1, h2, figure, ul { margin: 0; padding: 0; font: inherit; list-style: none; }
.icon { flex: none; width: 24px; height: 24px; color: #c3cad1; }
.faint { color: #50565d !important; }
.accent { color: #50e3c2 !important; }

.titlebar { display: flex; align-items: center; flex: none; height: 60px; padding: 0 10px 0 12px; }
.brand { display: flex; align-items: center; gap: 6px; min-width: 279px; font-weight: 400; }
.logo { width: 36px; height: 36px; }
.menu { display: flex; gap: 36px; }
.titlebar h1 { flex: 1; text-align: center; }
.window-tools { display: flex; gap: 24px; }

.top { display: flex; gap: 12px; flex: none; padding: 0 2px 0 12px; }
.panel { display: flex; flex-direction: column; flex: 1; min-width: 0; overflow: hidden; border-radius: 14px; background: #191d20; }
.tabs { display: flex; height: 84px; padding-left: 6px; background: linear-gradient(#161a1d, #11161c 40%, #0a121a); }
.tabs button { display: flex; flex-direction: column; align-items: center; gap: 5px; width: 84px; padding-top: 12px; }
.tabs svg { width: 30px; height: 30px; color: #c5cbd2; stroke-width: 2.7; }
.tabs .on, .tabs .on svg { color: #50e3c2; }
.media-body { display: flex; flex: 1; }
.folders { display: flex; flex-direction: column; gap: 13px; width: 240px; padding: 13px 21px 0 13px; }
.folders button { display: flex; align-items: center; height: 47px; padding-bottom: 2px; border-radius: 10px; background: #202427; color: #a2a8ad; font-weight: 400; text-align: left; }
.folders .strong { color: #c9ced3; }
.folders .current { background: none; color: #50e3c2; }
.folders i { width: 34px; height: 8px; }
.folders i.right { background: #9aa0a5; clip-path: polygon(11px 0, 17px 4px, 11px 8px); }
.folders i.down { background: #8d9398; clip-path: polygon(10px 1px, 18px 1px, 14px 7px); }
.library { flex: 1; padding: 12px 24px 0; background: linear-gradient(90deg, #15181b, #191d20 40px); }
.filters { display: flex; align-items: center; gap: 12px; }
.chip { display: flex; align-items: center; height: 36px; padding: 0 9px 2px 12px; border-radius: 9px; background: #2b2e33; color: #b6bcc2; }
.chip .small { width: 18px; height: 18px; margin-left: 15px; stroke-width: 2.4; }
.chip .rec { width: 18px; height: 18px; margin: 0 12px 0 3px; color: #cdd2d8; }
.search { display: flex; align-items: center; gap: 18px; flex: 1; height: 37px; padding: 0 9px; border-radius: 9px; background: #101316; color: #b4bac0; }
.search svg { width: 18px; height: 18px; stroke-width: 2.2; }
.search input { flex: 1; min-width: 0; outline: 0; }
.search input::placeholder { color: #7c8389; }
.wide { display: flex; align-items: center; justify-content: center; width: 36px; }
h2 { margin-top: 22px; color: #fff; font-size: 15px; font-weight: 400; }
.cards { display: flex; gap: 38px; margin: 31px 5px 0; }
figure { width: 190px; color: #b6bcc2; }
figure.active { color: #fff; }
figcaption { margin-top: 4px; white-space: nowrap; }
.thumb { position: relative; display: flex; align-items: center; justify-content: center; width: 100%; height: 108px; padding: 3px 1px; border-radius: 8px; background: #1d2226; }
.add { background: #20272e; }
.add svg { width: 34px; height: 34px; stroke: #50e3c2; stroke-width: 2.4; stroke-linecap: butt; }
.map { width: 100%; height: 100%; border-radius: 5px; }
.active .thumb { border: 3px solid #55e3c4; padding: 1px 0; }
.kind { position: absolute; left: 10px; bottom: 13px; color: #eef3f5; filter: drop-shadow(0 0 1px #7d8588); }
.active .kind { left: 7px; bottom: 10px; }
.tick { position: absolute; right: 7px; bottom: 9px; width: 30px; height: 30px; }
.active .tick { right: 4px; bottom: 6px; }
.tick circle { fill: #55e3c4; }
.tick path { fill: none; stroke: #07100e; stroke-width: 3; stroke-linecap: round; }

.player-head { display: flex; align-items: center; height: 60px; padding: 0 28px 0 24px; background: linear-gradient(#161a1d, #11161c 40%, #0a121a); }
.select { position: relative; width: 180px; margin: 0 auto 0 24px; }
.select select { width: 100%; height: 36px; padding: 0 12px; border-radius: 9px; appearance: none; background: #20262d; color: #b6bcc2; }
.select svg { position: absolute; right: 8px; top: 9px; width: 18px; height: 18px; color: #b6bcc2; stroke-width: 2.2; pointer-events: none; }
.view { width: 28px; height: 28px; margin-left: 32px; }
.view svg { width: 28px; height: 28px; }
.screen { width: 100%; margin: 48px 0 60px; }
.places text { fill: #a4a4a9; stroke: #fafafa; stroke-width: 2px; paint-order: stroke; text-anchor: middle; dominant-baseline: central; font-weight: 400; }
.places .major { fill: #929297; font-weight: 500; }
.places .water { fill: #5a86ea; stroke: none; font-weight: 700; }
.seek { display: flex; align-items: center; height: 36px; padding: 0 24px 0 27px; color: #c5cbd1; }
input[type=range] { flex: 1; min-width: 0; height: 18px; margin: 0; appearance: none; }
input[type=range]::-webkit-slider-runnable-track { height: 6px; border-radius: 3px; background: linear-gradient(90deg, #45dce6, #4cf0c0 var(--fill), #2d3037 var(--fill)); }
input[type=range]::-webkit-slider-thumb { width: 18px; height: 18px; margin-top: -6px; border: 3px solid #c9cdd2; border-radius: 50%; appearance: none; background: #50585f; }
.time { width: 132px; height: 36px; margin-left: 27px; border-radius: 9px; background: #111417; text-align: center; }
.slash { width: 33px; text-align: center; }
.transport { display: flex; justify-content: space-between; padding: 24px 30px 18px 30px; }
.transport div { display: flex; gap: 24px; }
.pair { display: flex; gap: 12px; }
.tiny svg { width: 16px; height: 24px; margin: 0 auto; }

.timeline { display: flex; flex-direction: column; flex: 1; min-height: 0; margin: 12px 2px 0 12px; overflow: hidden; border-radius: 14px 14px 0 0; background: #191d20; }
.bar { display: flex; flex: none; height: 60px; background: #0a121a; }
.tools { display: flex; align-items: center; flex: 1; padding-right: 9px; background: linear-gradient(#161a1d, #11161c 40%, #0a121a); }
.tool { position: relative; display: flex; justify-content: center; flex: none; width: 54px; color: #c3cad1; }
.tool:first-child { width: 36px; margin-right: 3px; }
.tool b { position: absolute; right: 11px; top: -7px; width: 6px; height: 6px; border-radius: 50%; background: #ff6060; }
.spacer { flex: 1; }
.tools .zoom { flex: none; width: 135px; }
.zoom::-webkit-slider-runnable-track { height: 4px !important; background: linear-gradient(90deg, #c3c8cd var(--fill), #20252b var(--fill)) !important; }
.zoom::-webkit-slider-thumb { width: 16px !important; height: 16px !important; border-width: 2px !important; }
.meter-tab { display: flex; align-items: center; gap: 8px; width: 108px; padding-left: 15px; border-radius: 12px 12px 0 0; background: #20272e; color: #c5cbd1; }
.meter-tab i { border: solid transparent; border-width: 0 5px 6px; border-bottom-color: #f2f4f6; }
.body { display: flex; flex: 1; min-height: 0; }
.editor { position: relative; display: flex; flex-direction: column; flex: 1; min-width: 0; overflow: hidden; }
.ruler-row { display: flex; flex: none; height: 48px; }
.head-tools { display: flex; align-items: center; gap: 24px; flex: none; width: 156px; padding: 0 18px 2px; }
.ruler { position: relative; display: flex; flex: 1; min-width: 0; overflow: hidden; border-bottom: 1px solid #0e1215; }
.second { flex: none; padding-top: 2px; color: #a7adb2; font-size: 15px; font-weight: 400; }
.second span { display: block; }
.second div { display: flex; align-items: flex-end; height: 15px; }
.second i { flex: 1; height: 6px; border-left: 1px solid #8d9398; }
.second i:first-child { height: 13px; }
.range { position: absolute; left: 0; bottom: 0; height: 3px; background: #ff6060; }
.tracks { position: relative; display: flex; flex-direction: column; flex: 1; background: #1e2427; }
.blank { height: 105px; flex: none; }
.track { display: flex; flex: none; background: #20262d; }
.tall { background: #1e2427; }
.rest { flex: 1; background: #20262d; }
.track-head { display: flex; flex-direction: column; gap: 10px; flex: none; width: 156px; padding: 24px 15px 0; }
.tall .track-head { padding-top: 39px; }
.track-head span { padding-left: 3px; color: #91979c; font-size: 15px; }
.track-head div { display: flex; gap: 18px; }
.track-head .icon { width: 18px; height: 18px; color: #a8aeb3; }
.track-head .lit { color: #fff; }
.track-head svg { width: 18px; height: 18px; stroke-width: 2; }
.lane { flex: 1; padding: 3px 0; }
.clip { position: relative; height: 99px; overflow: hidden; border-radius: 9px; background: #7761ca; }
.tall .clip { height: 131px; box-shadow: inset 0 0 0 1px #6350ae; }
.clip.selected::after { content: ""; position: absolute; inset: 0; border: 3px solid #f4f8fa; border-radius: 9px; box-shadow: inset 0 0 0 1px #07090c; }
.strip { display: flex; height: 61px; overflow: hidden; }
.tall .strip { height: 81px; }
.strip svg { height: 100%; }
.strip svg:nth-child(odd) { border-right: 1px solid #c5bee6; }
.clip-label { position: absolute; left: 12px; top: 12px; display: flex; align-items: center; gap: 7px; color: #fff; text-shadow: 0 0 1px #8b9490, 0 1px 1px #a0a8a4; }
.clip-label svg { color: #c3ccc6; }
.scrollbar { position: absolute; top: 0; right: 0; bottom: 0; width: 18px; border-radius: 9px 9px 0 0; background: #343a40; }
.overlay { position: absolute; inset: 0 0 0 156px; pointer-events: none; }
.fade { width: 60px; height: 100%; background: linear-gradient(90deg, rgba(20, 24, 27, .42), rgba(20, 24, 27, 0)); }
.playhead { position: absolute; top: 0; bottom: 0; width: 3px; margin-left: -1px; background: #ff6060; }
.knob { position: absolute; left: -8px; width: 18px; height: 18px; fill: #ff6060; }
.playhead button { position: absolute; left: -16px; top: 101px; width: 34px; height: 52px; padding-left: 5px; border-radius: 17px; background: #ff6060; color: #fff; }
.meter { display: flex; gap: 5px; flex: none; width: 156px; padding-left: 23px; background: #20272e; }
.levels { display: flex; gap: 9px; width: 83px; margin-top: 10px; padding-left: 1px; background: repeating-linear-gradient(#4b535a 0 1px, transparent 1px 55px); }
.levels i { width: 27px; margin-top: 4px; background: linear-gradient(#14181b, #11171e 30%, #0b121a); }
.levels b { width: 7px; margin-left: -3px; border-left: 3px solid #555d64; background: repeating-linear-gradient(#4b535a 0 1px, transparent 1px 11px); }
.meter li { height: 55px; color: #c5cbd1; line-height: 20px; }

.arrow { position: absolute; width: 40px; overflow: visible; fill: none; stroke: #55e3c4; stroke-width: 7; stroke-linecap: round; pointer-events: none; }
.arrow .tip { fill: #55e3c4; stroke: none; }
.first { left: 555px; top: 405px; }
.last { left: 785px; top: 410px; }
</style>
